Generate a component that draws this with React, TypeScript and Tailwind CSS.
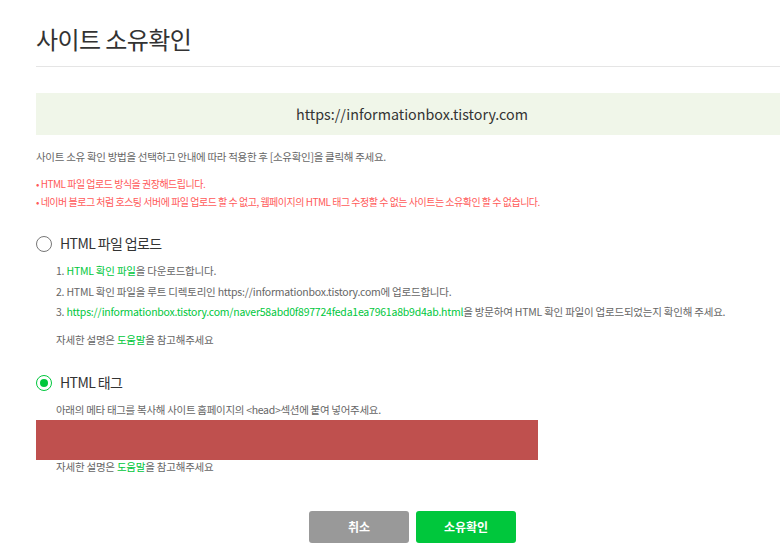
export default function App() {
  return (
    <div
      className="w-[780px] h-[559px] overflow-hidden bg-white"
      style={{ fontFamily: '"Noto Sans CJK KR", "Noto Sans", sans-serif' }}
    >
      <div className="w-[752px] ml-[36px] pt-[22px]">
        <h1 className="text-[24px] leading-[34px] text-[#333] font-normal tracking-[-0.6px]">
          사이트 소유확인
        </h1>
        <div className="mt-[10px] border-t border-[#e5e5e5]" />

        <div className="mt-[26px] h-[42px] bg-[#f0f6e9] flex items-center justify-center text-[14.3px] text-[#333]">
          https://informationbox.tistory.com
        </div>

        <p className="mt-[14px] text-[10.5px] leading-[16px] text-[#666] tracking-[-0.3px]">
          사이트 소유 확인 방법을 선택하고 안내에 따라 적용한 후 [소유확인]을 클릭해 주세요.
        </p>
        <div className="mt-[10px] text-[10px] leading-[18px] text-[#ff5a5a] tracking-[-0.5px]">
          <p>• HTML 파일 업로드 방식을 권장해드립니다.</p>
          <p>
            • 네이버 블로그 처럼 호스팅 서버에 파일 업로드 할 수 없고, 웹페이지의 HTML 태그 수정할 수 없는 사이트는 소유확인 할 수 없습니다.
          </p>
        </div>

        <div className="mt-[22px] flex items-center gap-[8px]">
          <span className="w-[16px] h-[16px] rounded-full border-[1.5px] border-[#777] bg-white" />
          <span className="text-[14px] text-[#333] tracking-[-0.6px]">HTML 파일 업로드</span>
        </div>
        <div className="ml-[20px] mt-[7px] text-[10.5px] leading-[20.5px] text-[#666] tracking-[-0.22px]">
          <p>
            1. <span className="text-[#00c73c]">HTML 확인 파일</span>을 다운로드합니다.
          </p>
          <p>2. HTML 확인 파일을 루트 디렉토리인 https://informationbox.tistory.com에 업로드합니다.</p>
          <p>
            3.{" "}
            <span className="text-[#00c73c]">
              https://informationbox.tistory.com/naver58abd0f897724feda1ea7961a8b9d4ab.html
            </span>
            을 방문하여 HTML 확인 파일이 업로드되었는지 확인해 주세요.
          </p>
          <p className="mt-[7px]">
            자세한 설명은 <span className="text-[#00c73c]">도움말</span>을 참고해주세요
          </p>
        </div>

        <div className="mt-[22px] flex items-center gap-[8px]">
          <span className="w-[16px] h-[16px] rounded-full border-[1.5px] border-[#00c73c] bg-white flex items-center justify-center">
            <span className="w-[8px] h-[8px] rounded-full bg-[#00c73c]" />
          </span>
          <span className="text-[14px] text-[#333] tracking-[-0.6px]">HTML 태그</span>
        </div>
        <p className="ml-[20px] mt-[9px] text-[10.5px] leading-[16px] text-[#666] tracking-[-0.3px]">
          아래의 메타 태그를 복사해 사이트 홈페이지의 &lt;head&gt;섹션에 붙여 넣어주세요.
        </p>
        <div className="mt-[2px] w-[502px] h-[40px] bg-[#bf504e]" />
        <p className="ml-[20px] text-[10.5px] leading-[13px] text-[#666] tracking-[-0.22px]">
          자세한 설명은 <span className="text-[#00c73c]">도움말</span>을 참고해주세요
        </p>

        <div className="mt-[38px] flex gap-[7px] ml-[273px]">
          <button className="w-[100px] h-[32px] rounded-[3px] bg-[#999] text-white text-[12px] font-bold">
            취소
          </button>
          <button className="w-[100px] h-[32px] rounded-[3px] bg-[#00c73c] text-white text-[12px] font-bold">
            소유확인
          </button>
        </div>
      </div>
    </div>
  );
}
